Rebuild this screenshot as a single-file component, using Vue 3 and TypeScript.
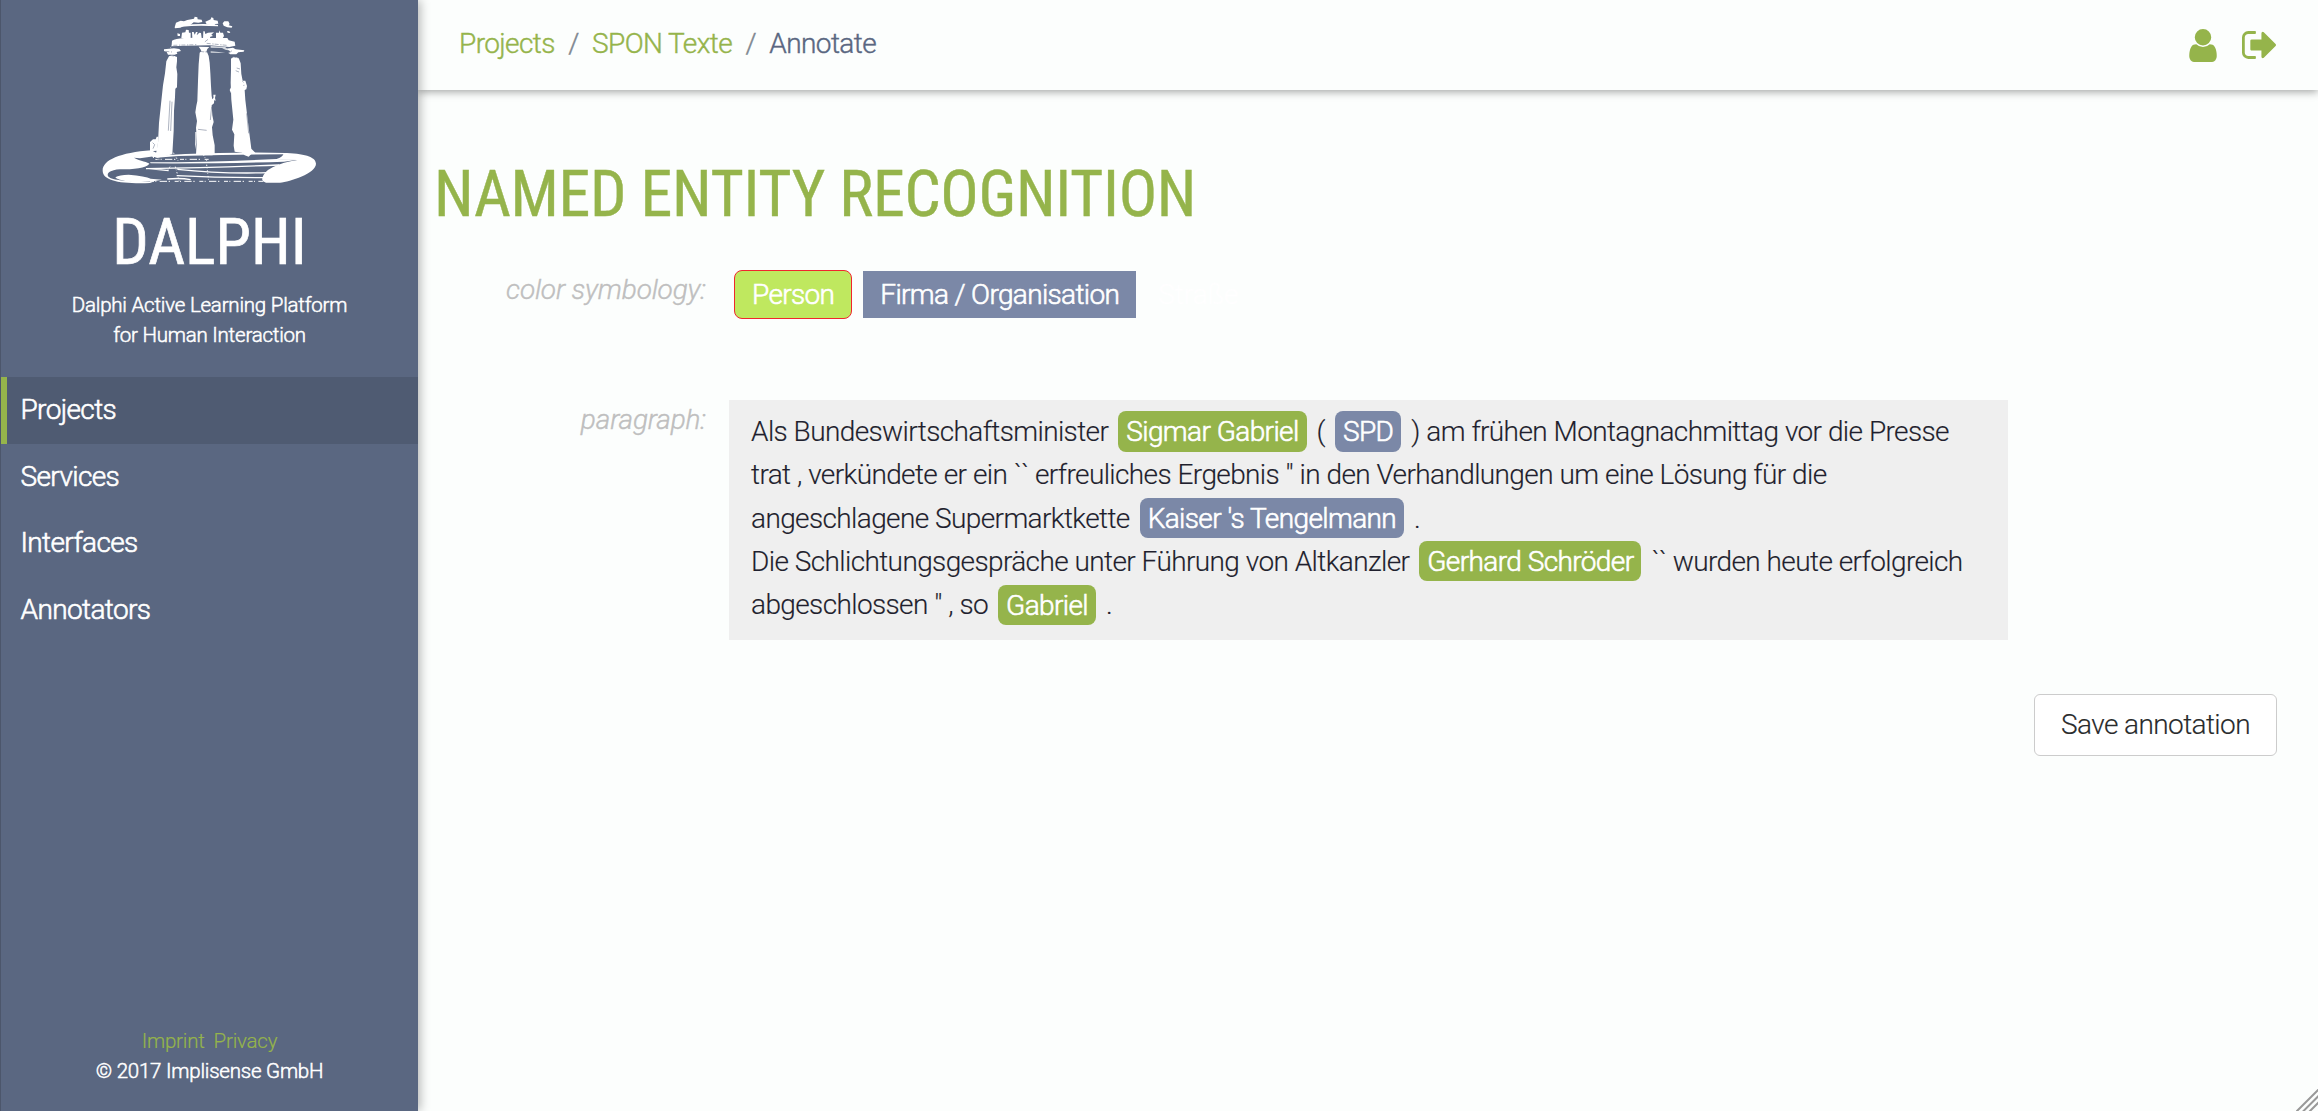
<script setup lang="ts">
type Piece = { text: string; kind?: 'person' | 'org' }

const menu = ['Projects', 'Services', 'Interfaces', 'Annotators']
const active = 'Projects'

const paragraphs: Piece[][] = [
  [
    { text: 'Als Bundeswirtschaftsminister ' },
    { text: 'Sigmar Gabriel', kind: 'person' },
    { text: ' ( ' },
    { text: 'SPD', kind: 'org' },
    { text: ' ) am frühen Montagnachmittag vor die Presse trat , verkündete er ein `` erfreuliches Ergebnis " in den Verhandlungen um eine Lösung für die angeschlagene Supermarktkette ' },
    { text: "Kaiser 's Tengelmann", kind: 'org' },
    { text: ' .' },
  ],
  [
    { text: 'Die Schlichtungsgespräche unter Führung von Altkanzler ' },
    { text: 'Gerhard Schröder', kind: 'person' },
    { text: ' `` wurden heute erfolgreich abgeschlossen " , so ' },
    { text: 'Gabriel', kind: 'person' },
    { text: ' .' },
  ],
]
</script>

<template>
  <div class="app">
    <aside class="sidebar">
      <svg class="logo" viewBox="0 0 720 600" width="240" height="200" fill="#fff">
        <!-- upper ruins -->
        <path d="M254 82l4-14 14-6 10 2 10-4 20-4 2-6 8 2 1 6 12 1 2 7-12 2-14-1-10 8-18 2-12 6-16 2z" />
        <path d="M346 65l10-4 6-3 2-6 6 2 1 6 12 2 2 9-9 1-5 6-11-3-10-2zM398 70l5-6 12 0 4 8-3 4 11 3-2 4-13-1-11-5z" />
        <path d="M274 76q70-8 110-1l0 4q-60-4-108 1z" />
        <path d="M276 98l10-1 2-8 8 1 1 8 5 0 0 16-28 0zM306 96h5l3 8 4-8h5l-3 10 8-8 5 1 2 15h-28zM340 94h4l2 8 8-4 18-1-8 7 5 4-8 2-2 8h-20zM378 98h9l1-7 3 7h8l3 10-4 7h-20zM411 93l7 1 3 5-8-1zM262 100l8 2 0 6-7 0z" />
        <!-- architrave -->
        <path d="M246 122q10-6 36-8 40-1 60 0l70 0 4 7 18 4 2 12-18 4-60-5-70 1-44 2-3 5 4 1q-4 2 0-10z" />
        <path d="M222 148l30-3 16 2 5 6-13 3 2 5-8 3-20 0-4-8-8-3zM326 140l32 1-6 6-3 8-14 0-4-8zM407 146l22-3 8 5 26 3-2 4-16 2-6 6-18 0-6-4 6-5z" />
        <path d="M362 138l44 3 8 10-8-2-10-5-34-1zM362 154l24 2 20 3-44-1z" opacity=".75" />
        <!-- columns -->
        <path d="M237 169l8-3 16 4 0 14-2 18 3 20-1 40-5 4-1 26-3 40-1 60-4 71-18 4-28 6-6-7 4-10 5-28 3-60 6-56 6-56 6-36 4-36z" />
        <path d="M329 158l6-6 16 4 5 12 3 20 2 30 2 40 2 30 2 10 6-6-1 18-7 6 2 30 4 20-5 16 2 24 6 30 0 28-8 2-48-1 2-40-1-28-1-14 3-20-5-26 3-20 3-14 2-60 2-50z" />
        <path d="M423 176l8-6 15 4 6 16 2 32 4 20 8 0 5 16-2 10-5 2 2 30 6 50 6 50 6 46 12 12-12 4-8 8-12-4-8-8-22-3-3-18 2-34-7-14 4-30-6-60-2-50 1-40z" />
        <path d="M180 454v-28l9-8 8 0 3-8h5l-1 18-2 24zM316 396l4 0-1 32-4 20 1-30zM370 284l7 0-2 10 2 8-6-2zM424 260l-5 10 4 10z" />
        <g stroke="#5a6781" fill="none" stroke-width="1.500">
          <path d="M240 302l-5 90M246 305l-4 88M324 388l26 3M365 320l-4 40M440 204l10 3M437 212l10 4M470 340l6 60M188 428l6 6-5 12" />
          <path d="M250 136l70-2M350 130l60 6M354 118l-10 8M226 154l20 2M426 152l-10 8M240 166l22 4M330 154l20 3M426 170l20 4" stroke-dasharray="12 5 4 3" />
          <path d="M457 244l7 6-3 8" stroke-dasharray="5 9" />
        </g>
        <!-- disc -->
        <path d="M38 512C38 480 90 458 184 451L214 466L150 475L132 473C150 484 176 486 178 491C170 505 130 508 90 508C60 510 50 520 54 528C60 540 110 546 190 545L180 549C90 552 38 542 38 512z" />
        <path d="M580 459C640 460 678 470 678 491C678 520 600 545 570 548L528 548Q514 544 517 534Q522 515 548 502Q580 486 622 480Q590 480 560 477Q582 470 580 459z" />
        <path d="M76 532q12-8 40-8 50 4 66 12l34 3-26 5-50 3q-54-4-64-15z" />
        <path d="M186 468q100-8 200-9 120-3 200 0l-4 4q-80 0-186 2l-130 3-76 6z" />
        <path d="M180 487q200-1 380-10l62 2-40 6q-160 6-400 5z" />
        <path fill="none" stroke="#fff" stroke-width="4" d="M168 506q190-3 400-11M262 508q130 14 272 10M236 512q-30-3-60-6M260 527q120 6 262 6M232 537q40-4 70 2" />
        <path fill="none" stroke="#fff" stroke-width="3" stroke-dasharray="12 4 3 10 22 5 4 14" d="M180 544h340M196 478l160 0" />
        <path fill="none" stroke="#fff" stroke-width="3" stroke-dasharray="4 5 2 6" d="M256 500l12 44M350 494l6 50M250 458l14 24M340 464l10 18M240 500l-8 12" />
        <path fill="none" stroke="#5a6781" stroke-width="3" d="M192 472l14 6M196 484l-6-8M220 482l14 2" />
      </svg>
      <div class="brand">DALPHI</div>
      <div class="claim">Dalphi Active Learning Platform<br>for Human Interaction</div>
      <nav class="menu">
        <a v-for="item in menu" :key="item" :class="{ active: item === active }">{{ item }}</a>
      </nav>
      <footer class="foot">
        <div class="links"><a>Imprint</a><a>Privacy</a></div>
        <div>© 2017 Implisense GmbH</div>
      </footer>
    </aside>

    <div class="main">
      <header class="topbar">
        <div class="crumbs">
          <a>Projects</a><i>/</i><a>SPON Texte</a><i>/</i><span>Annotate</span>
        </div>
        <div class="actions">
          <svg width="28" height="33" viewBox="0 128 1280 1536"><path d="M1280 1399q0 109-62.500 187t-150.500 78h-854q-88 0-150.500-78t-62.500-187q0-85 8.500-160.500t31.500-152 58.500-131 94-89 134.500-34.500q131 128 313 128t313-128q76 0 134.500 34.500t94 89 58.500 131 31.500 152 8.500 160.500zm-256-887q0 159-112.500 271.500t-271.500 112.500-271.500-112.500-112.500-271.500 112.500-271.500 271.500-112.500 271.500 112.500 112.500 271.500z" /></svg>
          <svg width="34" height="28" viewBox="64 256 1568 1280"><path d="M704 1440q0 4 1 20t.5 26.500-3 23.500-10 19.500-20.500 6.500h-320q-119 0-203.500-84.500t-84.500-203.500v-704q0-119 84.500-203.500t203.500-84.500h320q13 0 22.500 9.500t9.500 22.500q0 4 1 20t.5 26.500-3 23.500-10 19.500-20.500 6.500h-320q-66 0-113 47t-47 113v704q0 66 47 113t113 47h312l11.500 1 11.500 3 8 5.500 7 9 2 13.500zm928-544q0 26-19 45l-544 544q-19 19-45 19t-45-19-19-45v-288h-448q-26 0-45-19t-19-45v-384q0-26 19-45t45-19h448v-288q0-26 19-45t45-19 45 19l544 544q19 19 19 45z" /></svg>
        </div>
      </header>

      <main class="content">
        <h1>NAMED ENTITY RECOGNITION</h1>
        <div class="row legend">
          <div class="label">color symbology:</div>
          <div class="chips">
            <span class="chip person">Person</span>
            <span class="chip org">Firma / Organisation</span>
            <span class="chip street">Straße</span>
          </div>
        </div>
        <div class="row">
          <div class="label">paragraph:</div>
          <div class="text">
            <div v-for="(p, i) in paragraphs" :key="i"><template v-for="(piece, j) in p" :key="j"><span v-if="piece.kind" class="tag" :class="piece.kind">{{ piece.text }}</span><template v-else>{{ piece.text }}</template></template></div>
          </div>
        </div>
        <div class="save-row"><button>Save annotation</button></div>
      </main>
      <svg class="grip" width="22" height="22" viewBox="0 0 22 22"><path d="M0.500 22.500L22.500 .5M6.500 23L23 6.500M12.500 23.500L23.500 12.500" /></svg>
    </div>
  </div>
</template>

<style>
body { background: #fcfefd; overflow: hidden; }
</style>

<style scoped>
.app {
  display: flex;
  height: 1111px;
  font: 300 28px/43.3px Roboto, "Noto Sans", sans-serif;
  letter-spacing: -0.6px;
  color: #1f1f2e;
  background: #fcfefd;
  -webkit-text-stroke: 0.15px currentColor;
}
.sidebar {
  position: relative;
  z-index: 2;
  box-sizing: border-box;
  flex: none;
  width: 418px;
  display: flex;
  flex-direction: column;
  border-left: 1px solid #4c566b;
  background: #5a6781;
  color: #fff;
  box-shadow: 2px 0 10px rgba(0, 0, 0, .3);
  -webkit-text-stroke-width: 0.6px;
}
.logo { display: block; margin-left: 89px; flex: none; }
.brand {
  margin-top: 8px;
  height: 70px;
  font: 400 64px/70px "Roboto Condensed", Roboto, sans-serif;
  letter-spacing: 0;
  text-align: center;
  -webkit-text-stroke-width: 0.7px;
}
.claim {
  margin: 12px 0 26px;
  font-size: 20.500px;
  line-height: 30px;
  letter-spacing: -0.22px;
  text-align: center;
  height: 61px;
  -webkit-text-stroke-width: 0.5px;
}
.menu a {
  box-sizing: border-box;
  display: block;
  height: 66.700px;
  padding: 0 0 0 13.500px;
  line-height: 66.700px;
  letter-spacing: -0.62px;
  border-left: 6px solid transparent;
}
.menu a.active { background: #4f5b72; border-left-color: #95b44b; }
.foot {
  margin-top: auto;
  padding-bottom: 25px;
  font-size: 20.500px;
  line-height: 30px;
  letter-spacing: -0.22px;
  text-align: center;
  -webkit-text-stroke-width: 0.5px;
}
.links { display: flex; justify-content: center; gap: 9px; color: #95b44b; -webkit-text-stroke-width: 0.2px; }
.main { position: relative; flex: 1; min-width: 0; display: flex; flex-direction: column; }
.topbar {
  box-sizing: border-box;
  height: 90px;
  flex: none;
  display: flex;
  align-items: center;
  justify-content: space-between;
  padding: 0 42px 0 41px;
  box-shadow: 0 2px 8px rgba(0, 0, 0, .35);
}
.crumbs { display: flex; padding-bottom: 2px; color: #5a6781; -webkit-text-stroke-width: 0.4px; }
.crumbs a { color: #95b44b; }
.crumbs i { font-style: normal; color: #7f8790; width: 37.300px; text-align: center; }
.actions { display: flex; align-items: center; gap: 25px; }
.actions svg { fill: #95b44b; display: block; }
.content { padding: 67px 41px 0 16px; }
h1 {
  margin: 0;
  font: 400 64px/76px "Roboto Condensed", Roboto, sans-serif;
  letter-spacing: -0.33px;
  color: #95b44b;
  -webkit-text-stroke-width: 0.4px;
}
.row { display: flex; align-items: flex-start; }
.legend { height: 130px; margin-top: 37px; }
.label {
  flex: none;
  width: 272px;
  margin-right: 23px;
  line-height: 39px;
  text-align: right;
  font-style: italic;
  letter-spacing: -0.17px;
  color: #bfbfbf;
  -webkit-text-stroke-width: 0.4px;
}
.chips { display: flex; gap: 11px; padding-left: 5px; color: #fff; letter-spacing: -0.66px; -webkit-text-stroke-width: 0.6px; }
.chip { box-sizing: border-box; height: 47px; line-height: 47px; padding: 0 17px; margin-top: 1px; }
.chip.person {
  height: 49px;
  margin-top: 0;
  border: 1px solid #f0262e;
  border-radius: 8px;
  background: #bfe85f;
}
.chip.org { background: #7b88a7; }
.chip.street { padding-left: 11px; letter-spacing: 0; }
.text {
  box-sizing: border-box;
  width: 1279px;
  height: 240px;
  padding: 10px 22px;
  letter-spacing: -0.62px;
  word-spacing: 0.3px;
  background: #efefef;
}
.tag {
  margin: 0 3.500px;
  padding: 3.600px 8px;
  border-radius: 8px;
  color: #fff;
  -webkit-text-stroke-width: 0.6px;
}
.tag.person { background: #95b44b; }
.tag.org { background: #7b88a7; }
.save-row { display: flex; justify-content: flex-end; margin-top: 54px; }
button {
  box-sizing: border-box;
  width: 243px;
  height: 62px;
  padding: 0;
  font: inherit;
  letter-spacing: inherit;
  color: #292b2c;
  background: #fff;
  border: 1px solid #ccc;
  border-radius: 6px;
}
.grip { position: absolute; right: 0; bottom: 0; stroke: #999; stroke-width: 2; }
</style>
